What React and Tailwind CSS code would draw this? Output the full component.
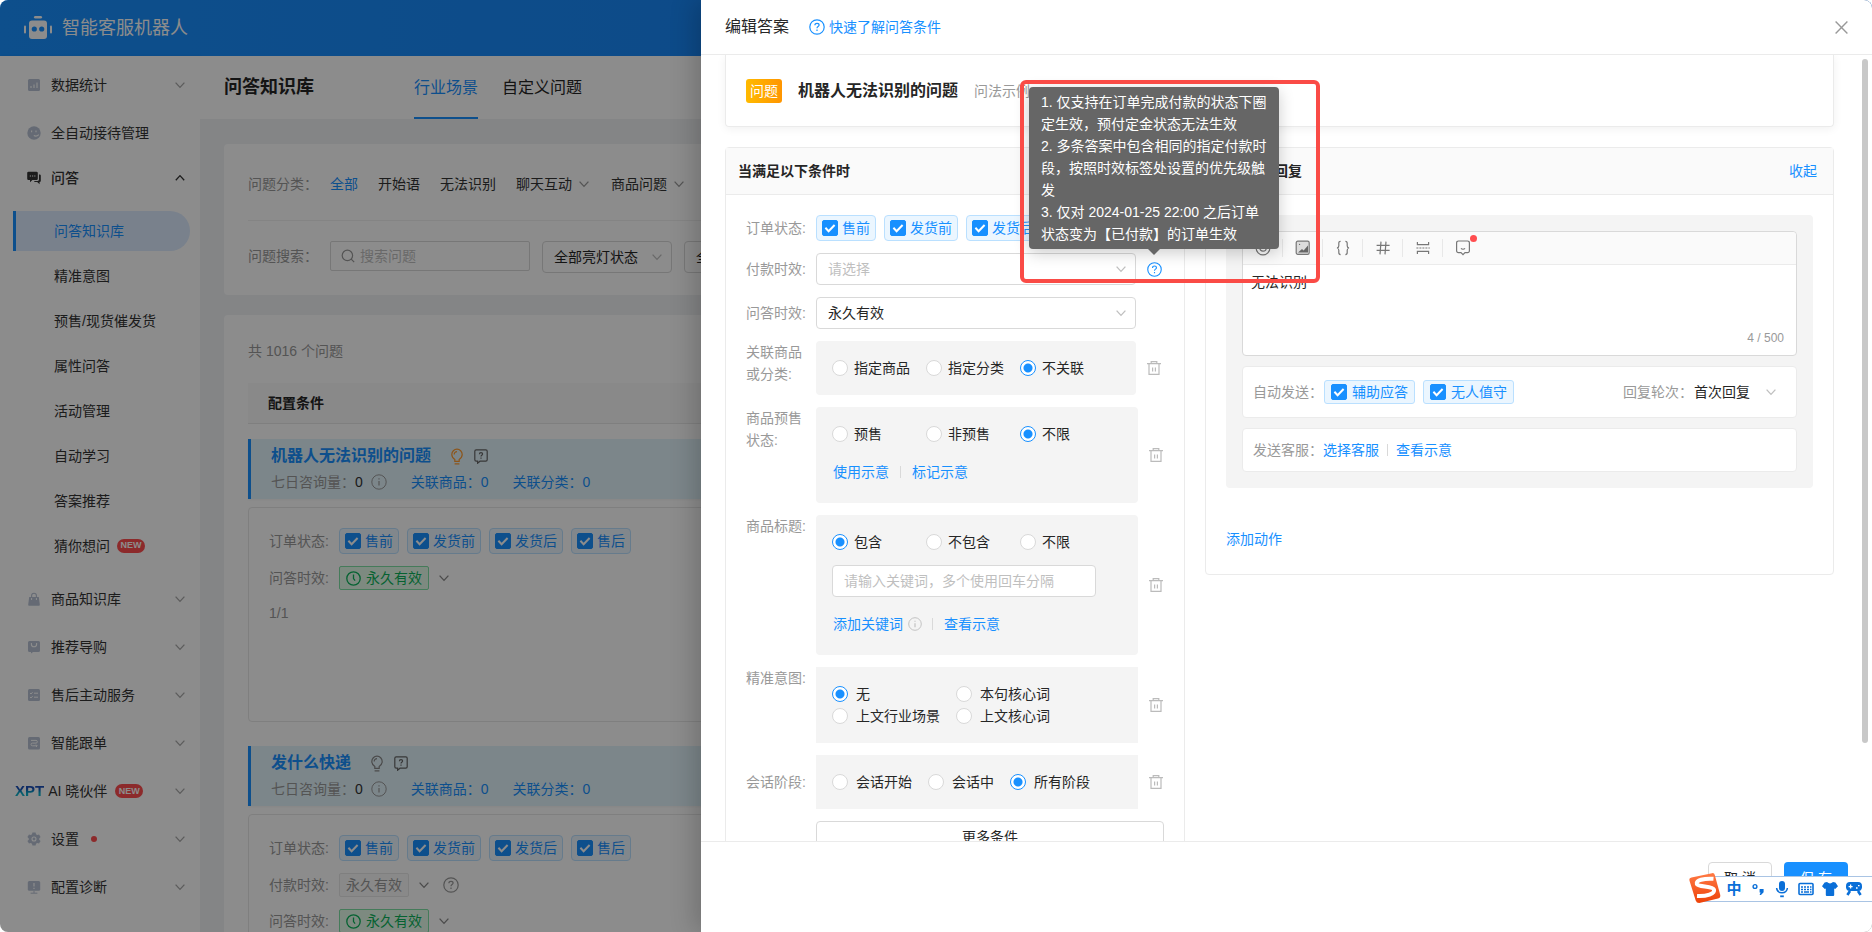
import React from "react";

const BLUE = "#1890ff";

function Chevron({ up, className = "" }) {
  return (
    <svg width="10" height="10" viewBox="0 0 10 10" fill="none" stroke="currentColor" strokeWidth="1.3" className={`shrink-0 ${className}`}>
      <path d={up ? "M0.8 7.2 5 2.6l4.2 4.6" : "M0.6 2.6 5 7.4l4.4-4.8"} />
    </svg>
  );
}

function Info({ size = 16, className = "" }) {
  return (
    <svg width={size} height={size} viewBox="0 0 16 16" fill="none" stroke="currentColor" className={`shrink-0 ${className}`}>
      <circle cx="8" cy="8" r="7.2" />
      <path d="M8 7v4.6M8 4.2v1.3" strokeWidth="1.2" />
    </svg>
  );
}

function Question({ size = 16, className = "" }) {
  return (
    <svg width={size} height={size} viewBox="0 0 16 16" fill="none" stroke="currentColor" strokeWidth="1.2" className={`shrink-0 ${className}`}>
      <circle cx="8" cy="8" r="7.2" />
      <path d="M5.9 6.3C5.9 5 6.8 4.3 8 4.3s2.1.7 2.1 1.8c0 1.5-2.1 1.5-2.1 3.1M8 10.6v1.3" />
    </svg>
  );
}

function Trash() {
  return (
    <button type="button" aria-label="删除" className="flex shrink-0 self-center text-[#bbb]">
      <svg width="14" height="16" viewBox="0 0 14 16" fill="none" stroke="currentColor" strokeWidth="1.2">
        <path d="M0 3.6h14M4.2 3.4V1.6h5.6v1.8M2 3.6v10.8h10V3.6M5.6 7.4v4M8.4 7.4v4" />
      </svg>
    </button>
  );
}

const navIcons = {
  chart: (
    <>
      <rect x="1" y="1" width="12" height="12" rx="1.5" />
      <path d="M4 10V8M7 10V6.4M10 10V4.4" stroke="#fff" strokeWidth="1.1" />
    </>
  ),
  face: (
    <>
      <circle cx="7" cy="7" r="6.7" />
      <path d="M4.6 4.6v1.6M9 4.6v1.6M6.8 9.6c1.8 1 3.6.6 5-1" stroke="#fff" strokeWidth="1.1" fill="none" />
    </>
  ),
  chat: (
    <>
      <path d="M1.5.8h8a1.3 1.3 0 0 1 1.3 1.3v5.6A1.3 1.3 0 0 1 9.5 9H5.4L3 11.2V9H1.5A1.3 1.3 0 0 1 .2 7.7V2.1A1.3 1.3 0 0 1 1.5.8z" />
      <path d="M12 3.4h.6a1.2 1.2 0 0 1 1.2 1.2v5.2a1.2 1.2 0 0 1-1.2 1.2v2.2L10.2 11H6.800l1-1h2.800a1.400 1.400 0 0 0 1.400-1.400z" />
      <path d="M2.8 5h1.2M5 5h1.2M7.2 5h1.2" stroke="#fff" strokeWidth="1.2" />
    </>
  ),
  bag: (
    <>
      <path d="M2.2 5h9.600l1 7.600a1 1 0 0 1-1 1.200H2.200a1 1 0 0 1-1-1.200z" />
      <path d="M4.6 8V3.600a2.400 2.400 0 0 1 4.800 0V8" stroke="currentColor" fill="none" strokeWidth="1.1" />
      <path d="M4.6 6v2M9.4 6v2" stroke="#fff" />
    </>
  ),
  guide: (
    <>
      <path d="M2.5 1h9A1.5 1.5 0 0 1 13 2.5v8a1.5 1.5 0 0 1-1.5 1.5H6l-2 1.6V12H2.5A1.5 1.5 0 0 1 1 10.5v-8A1.5 1.5 0 0 1 2.5 1z" />
      <path d="M4.4 3v1.2a2.6 2.6 0 0 0 5.2 0V3" stroke="#fff" fill="none" strokeWidth="1.1" />
    </>
  ),
  list: (
    <>
      <rect x="1" y="1" width="12" height="12" rx="1.5" />
      <path d="m3 5 1 1 1.6-1.8M7 5.2h4M3 9l1 1 1.6-1.8M7 9.2h4" stroke="#fff" fill="none" />
    </>
  ),
  follow: (
    <>
      <rect x="1" y="1" width="12" height="12.5" rx="1.5" />
      <path d="M4 4.4h5a1.3 1.3 0 0 1 0 2.7H5.4a1.3 1.3 0 0 0 0 2.7H10M9 8.6l1.2 1.2L9 11" stroke="#fff" fill="none" />
    </>
  ),
  gear: (
    <>
      <path d="M5.4.5h3.200l.4 1.800 1.200.7 1.800-.6 1.600 2.700-1.400 1.300v1.300l1.400 1.200-1.600 2.700-1.800-.5-1.200.7-.4 1.700H5.400L5 11.800l-1.200-.7-1.800.5L.4 8.900l1.400-1.200V6.400L.4 5.100 2 2.400l1.800.6L5 2.300z" />
      <circle cx="7" cy="7" r="2" fill="none" stroke="#fff" strokeWidth="1.1" />
    </>
  ),
  diag: (
    <>
      <rect x=".8" y="1" width="12.4" height="9.8" rx="1.5" />
      <path d="M7 10.8v2.200M3.600 13.200h6.800" stroke="currentColor" />
      <path d="M7 3v3.600M7 7.800v1.200" stroke="#fff" strokeWidth="1.2" />
    </>
  ),
};

function NavIcon({ name }) {
  return (
    <svg width="14" height="14" viewBox="0 0 14 14" fill="currentColor" className="shrink-0">
      {navIcons[name]}
    </svg>
  );
}

function NewBadge() {
  return (
    <span className="flex h-3.5 w-7 shrink-0 items-center justify-center rounded-full bg-[#ff4d4f] text-[9px] font-black text-white">
      NEW
    </span>
  );
}

function NavItem({ icon, label, dot }) {
  return (
    <a href="#" className="flex h-12 items-center pr-[15px] pl-[27px] text-[#b8c2d4]">
      <NavIcon name={icon} />
      <span className="ml-2.5 text-[#333]">{label}</span>
      {dot && <span className="ml-3 size-1.5 rounded-full bg-[#ff4d4f]" />}
      <Chevron className="ml-auto text-[#a8a8a8]" />
    </a>
  );
}

const subItems = ["精准意图", "预售/现货催发货", "属性问答", "活动管理", "自动学习", "答案推荐"];

function Sidebar() {
  return (
    <nav className="w-[200px] shrink-0 bg-white pt-[5px] shadow-[1px_0_3px_rgba(0,0,0,0.06)]">
      <NavItem icon="chart" label="数据统计" />
      <a href="#" className="flex h-12 items-center gap-2.5 pl-[27px] text-[#b8c2d4]">
        <NavIcon name="face" />
        <span className="text-[#333]">全自动接待管理</span>
      </a>
      <a href="#" className="flex h-[42px] items-center gap-2.5 pr-[15px] pl-[27px] font-medium text-[#333]">
        <NavIcon name="chat" />
        <span>问答</span>
        <Chevron up className="ml-auto" />
      </a>
      <div className="pt-[9px] pb-[7px]">
        <div className="flex h-[45px] items-center pr-2.5 pl-[13px]">
          <a href="#" className="flex h-10 flex-1 items-center rounded-r-full border-l-[3px] border-[#1890ff] bg-[#dcebff] pl-[38px] text-[#1890ff]">
            问答知识库
          </a>
        </div>
        {subItems.map((t) => (
          <a key={t} href="#" className="flex h-[45px] items-center pl-[54px] text-[#333]">
            {t}
          </a>
        ))}
        <a href="#" className="flex h-[45px] items-center gap-[7px] pl-[54px] text-[#333]">
          猜你想问 <NewBadge />
        </a>
      </div>
      <NavItem icon="bag" label="商品知识库" />
      <NavItem icon="guide" label="推荐导购" />
      <NavItem icon="list" label="售后主动服务" />
      <NavItem icon="follow" label="智能跟单" />
      <a href="#" className="flex h-12 items-center pr-[15px] pl-[15px]">
        <span className="bg-gradient-to-b from-[#1a4fb8] from-40% to-[#10b0c8] to-60% bg-clip-text text-[15px] font-black text-transparent">XPT</span>
        <span className="mr-2 ml-1 text-[#333]">AI 晓伙伴</span>
        <NewBadge />
        <Chevron className="ml-auto text-[#a8a8a8]" />
      </a>
      <NavItem icon="gear" label="设置" dot />
      <NavItem icon="diag" label="配置诊断" />
    </nav>
  );
}

function CheckTag({ label, wide }) {
  return (
    <label
      className={
        wide
          ? "flex h-6 items-center gap-[5px] rounded-[3px] border border-[#bae0ff] bg-[#ebf6ff] px-1.5 text-[#1890ff]"
          : "flex h-[26px] items-center gap-1 rounded border border-[#bae0ff] bg-[#ebf6ff] px-[5px] text-[#1890ff]"
      }
    >
      <span className="relative flex size-4">
        <input type="checkbox" defaultChecked className="peer size-4 appearance-none rounded-[2px] border border-[#d9d9d9] bg-white checked:border-[#1890ff] checked:bg-[#1890ff]" />
        <svg viewBox="0 0 16 16" fill="none" stroke="#fff" strokeWidth="2" className="pointer-events-none absolute inset-0 hidden peer-checked:block">
          <path d="m3.4 7.8 3.2 3.4 6-6.200" />
        </svg>
      </span>
      {label}
    </label>
  );
}

function ForeverTag() {
  return (
    <>
      <span className="flex h-6 items-center gap-[5px] rounded-[2px] border border-[#7fe0a4] bg-[#e3fcea] px-1.5 text-[#0bb35a]">
        <svg width="15" height="15" viewBox="0 0 15 15" fill="none" stroke="currentColor" strokeWidth="1.3">
          <circle cx="7.5" cy="7.5" r="6.7" />
          <path d="M7.5 3.6v4l1.6 2" />
        </svg>
        永久有效
      </span>
      <Chevron className="ml-2.5 text-[#888]" />
    </>
  );
}

function CardRow({ label, children, tall }) {
  return (
    <div className={tall ? "flex h-[26px] items-center" : "flex h-6 items-center"}>
      <span className="w-[70px] text-[#999]">{label}</span>
      {children}
    </div>
  );
}

function OrderTags() {
  return (
    <div className="flex gap-2">
      {["售前", "发货前", "发货后", "售后"].map((t) => (
        <CheckTag key={t} label={t} />
      ))}
    </div>
  );
}

function QuestionHead({ title, lit }) {
  return (
    <div className="h-[60px] border-l-[3px] border-[#1890ff] bg-[#e2f4fc] pt-[5px] pl-5 shadow-[0_1px_2px_rgba(0,0,0,0.05)]">
      <div className="flex h-6 items-center text-base font-bold text-[#1890ff]">
        <h3>{title}</h3>
        <svg width="12" height="17" viewBox="0 0 12 17" fill="none" stroke="currentColor" strokeWidth="1.2" className={lit ? "ml-5 text-[#ff9a2e]" : "ml-5 text-[#888]"}>
          <path d="M3.8 13.4v-2C2 10.2.8 8.6.8 6.4a5.2 5.2 0 0 1 10.4 0c0 2.2-1.2 3.8-3 5v2zM3.6 15.8h4.8M3.2 6.4A2.8 2.8 0 0 1 6 3.6" />
        </svg>
        <svg width="14" height="15" viewBox="0 0 14 15" fill="none" stroke="currentColor" strokeWidth="1.2" className="ml-[11px] text-[#666]">
          <path d="M2.2.8h9.6a1.4 1.4 0 0 1 1.4 1.4v8.6a1.4 1.4 0 0 1-1.4 1.4H6l-2.4 2v-2H2.200a1.400 1.400 0 0 1-1.400-1.400V2.200A1.400 1.400 0 0 1 2.200.8zM5.400 5.200c0-1 .7-1.500 1.600-1.500s1.600.5 1.600 1.400c0 1.200-1.600 1.200-1.600 2.400M7 8.600v1.200" />
        </svg>
      </div>
      <div className="mt-[3px] flex h-[22px] items-center text-[#999]">
        七日咨询量：<span className="text-[#333]">0</span>
        <Info className="mr-6 ml-2" />
        <a href="#" className="mr-6 text-[#1890ff]">关联商品：0</a>
        <a href="#" className="text-[#1890ff]">关联分类：0</a>
      </div>
    </div>
  );
}

function SelectBox({ id, options, className, wrap, placeholder, label }) {
  return (
    <div className={`grid items-center ${wrap}`}>
      <select
        id={id}
        aria-label={label}
        className={`col-start-1 row-start-1 h-8 w-full appearance-none rounded border border-[#d9d9d9] bg-white px-[11px] ${placeholder ? "text-[#bfbfbf]" : "text-[#262626]"} ${className || ""}`}
      >
        {options.map((o) => (
          <option key={o}>{o}</option>
        ))}
      </select>
      <Chevron className="pointer-events-none col-start-1 row-start-1 mr-2.5 justify-self-end text-[#bfbfbf]" />
    </div>
  );
}

function Page() {
  return (
    <div className="flex h-full flex-col">
      <header className="flex h-14 shrink-0 items-center bg-gradient-to-r from-[#1890ff] to-[#1a7cf0] pl-6 text-lg text-white">
        <svg width="28" height="24" viewBox="0 0 28 24" fill="currentColor">
          <rect x="10" y="0" width="8" height="2.4" rx="1.2" />
          <rect x="5" y="4.5" width="18" height="18.5" rx="3" />
          <rect x="0" y="9.5" width="2" height="8" rx="1" />
          <rect x="26" y="9.5" width="2" height="8" rx="1" />
          <circle cx="10.3" cy="13" r="2.6" fill={BLUE} />
          <circle cx="17.7" cy="13" r="2.6" fill={BLUE} />
        </svg>
        <span className="ml-2.5">智能客服机器人</span>
      </header>
      <div className="flex min-h-0 flex-1">
        <Sidebar />
        <main className="min-w-0 flex-1 overflow-hidden bg-[#f0f2f5]">
          <div className="flex h-[63px] bg-white pl-6">
            <h1 className="text-lg leading-[63px] font-bold text-[#262626]">问答知识库</h1>
            <div className="ml-[100px] flex gap-6 text-base">
              <a href="#" className="flex items-center border-b-2 border-[#1890ff] pt-0.5 text-[#1890ff]">行业场景</a>
              <a href="#" className="flex items-center border-b-2 border-transparent pt-0.5 text-[#262626]">自定义问题</a>
            </div>
          </div>
          <section className="mx-6 mt-[25px] rounded bg-white px-6 pt-6 pb-[22px]">
            <div className="flex h-8 items-center text-[#333]">
              <span className="w-[82px] text-[#999]">问题分类：</span>
              <div className="flex items-center gap-5">
                <a href="#" className="text-[#1890ff]">全部</a>
                <a href="#">开始语</a>
                <a href="#">无法识别</a>
                <a href="#" className="mr-0.5 flex items-center gap-[7px]">聊天互动 <Chevron className="text-[#999]" /></a>
                <a href="#" className="flex items-center gap-[7px]">商品问题 <Chevron className="text-[#999]" /></a>
              </div>
            </div>
            <div className="mt-5 flex items-start border-t border-[#f0f0f0] pt-5">
              <label htmlFor="q" className="w-[82px] leading-[30px] text-[#999]">问题搜索：</label>
              <div className="mr-3 flex h-[30px] w-[200px] items-center gap-[5px] rounded-[2px] border border-[#d9d9d9] pl-2.5 text-[#999]">
                <svg width="14" height="14" viewBox="0 0 14 14" fill="none" stroke="currentColor" strokeWidth="1.2" className="shrink-0">
                  <circle cx="6.4" cy="6.4" r="5.2" />
                  <path d="m10.2 10.2 3 3" />
                </svg>
                <input id="q" placeholder="搜索问题" className="w-full min-w-0 outline-none placeholder:text-[#bfbfbf]" />
              </div>
              <SelectBox label="亮灯状态" wrap="mr-3 w-[130px]" options={["全部亮灯状态"]} />
              <SelectBox label="答案状态" wrap="w-[130px]" options={["全部状态"]} />
            </div>
          </section>
          <section className="mx-6 mt-5 rounded bg-white px-6 pt-[25px] pb-6">
            <p className="leading-[22px] text-[#999]">共 1016 个问题</p>
            <div className="mt-[21px] mb-[15px] flex h-[41px] items-center border-b border-[#e8e8e8] bg-[#fafafa] pl-5 font-bold text-[#262626]">
              配置条件
            </div>
            <QuestionHead title="机器人无法识别的问题" lit />
            <div className="mt-2 mb-6 flex h-[215px] flex-col gap-3 rounded border border-[#e8e8e8] px-5 pt-5">
              <CardRow label="订单状态:" tall><OrderTags /></CardRow>
              <CardRow label="问答时效:"><ForeverTag /></CardRow>
              <p className="leading-[22px] text-[#999]">1/1</p>
            </div>
            <QuestionHead title="发什么快递" />
            <div className="mt-2 flex h-[215px] flex-col gap-3 rounded border border-[#e8e8e8] px-5 pt-5">
              <CardRow label="订单状态:" tall><OrderTags /></CardRow>
              <CardRow label="付款时效:">
                <span className="flex h-6 items-center rounded-[2px] border border-[#e8e8e8] bg-[#fafafa] px-1.5 text-[#999]">永久有效</span>
                <Chevron className="mr-3.5 ml-2.5 text-[#888]" />
                <Question className="text-[#999]" />
              </CardRow>
              <CardRow label="问答时效:"><ForeverTag /></CardRow>
            </div>
          </section>
        </main>
      </div>
    </div>
  );
}

function Radio({ name, label, checked, className = "", gap = "gap-1.5" }) {
  return (
    <label className={`flex h-[22px] items-center text-[#262626] ${gap} ${className}`}>
      <input
        type="radio"
        name={name}
        defaultChecked={checked}
        className="size-4 shrink-0 appearance-none rounded-full border border-[#d9d9d9] bg-white checked:border-[#1890ff] checked:bg-[radial-gradient(circle,#1890ff_0_4px,#fff_5px)]"
      />
      {label}
    </label>
  );
}

function Field({ label, children, action, className = "", center }) {
  return (
    <div className="flex">
      <span className={`w-[70px] shrink-0 leading-[22px] text-[#999] ${center ? "self-center" : ""}`}>{label}</span>
      <div className={className}>{children}</div>
      {action && <span className="ml-[11px] flex">{action}</span>}
    </div>
  );
}

function RadioRow({ name, items, selected }) {
  return (
    <div className="grid grid-cols-[94px_94px_1fr]">
      {items.map((t) => (
        <Radio key={t} name={name} label={t} checked={t === selected} />
      ))}
    </div>
  );
}

function Bar() {
  return <span className="h-3 w-px bg-[#d9d9d9]" />;
}

function Conditions() {
  return (
    <section className="w-[460px] shrink-0 rounded-t border border-[#ebebeb]">
      <h2 className="flex h-[47px] items-center border-b border-[#ebebeb] bg-[#fafafa] pl-3 font-bold text-[#262626]">当满足以下条件时</h2>
      <div className="flex flex-col gap-3 py-5 pl-5">
        <Field label="订单状态:" center><OrderTags /></Field>
        <Field label={<label htmlFor="pay">付款时效:</label>} center action={<Question size={15} className="self-center text-[#1890ff]" />} className="w-80">
          <SelectBox id="pay" wrap="w-full" options={["请选择"]} placeholder />
        </Field>
        <Field label={<label htmlFor="valid">问答时效:</label>} center className="w-80">
          <SelectBox id="valid" wrap="w-full" options={["永久有效"]} />
        </Field>
        <Field label={<>关联商品<br />或分类:</>} action={<Trash />} className="w-80 rounded bg-[#f4f4f4] p-4">
          <RadioRow name="goods" items={["指定商品", "指定分类", "不关联"]} selected="不关联" />
        </Field>
        <Field label={<>商品预售<br />状态:</>} action={<Trash />} className="h-24 w-[322px] rounded bg-[#f4f4f4] p-4">
          <RadioRow name="presale" items={["预售", "非预售", "不限"]} selected="不限" />
          <div className="mt-4 flex h-[22px] items-center gap-[11px] pl-px text-[#1890ff]">
            <a href="#">使用示意</a><Bar /><a href="#">标记示意</a>
          </div>
        </Field>
        <Field label="商品标题:" action={<Trash />} className="h-[140px] w-[322px] rounded bg-[#f4f4f4] p-4">
          <RadioRow name="title" items={["包含", "不包含", "不限"]} selected="包含" />
          <input aria-label="关键词" placeholder="请输入关键词，多个使用回车分隔" className="mt-3 block h-8 w-[264px] rounded border border-[#d9d9d9] bg-white px-[11px] placeholder:text-[#bfbfbf]" />
          <div className="mt-4 flex h-[22px] items-center pl-px text-[#1890ff]">
            <a href="#" className="mr-[5px]">添加关键词</a>
            <Info size={14} className="mr-2.5 text-[#bbb]" />
            <Bar />
            <a href="#" className="ml-[11px]">查看示意</a>
          </div>
        </Field>
        <Field label="精准意图:" action={<Trash />} className="w-[322px] bg-[#f4f4f4] p-4">
          <div className="grid grid-cols-[124px_1fr]">
            <Radio name="intent" label="无" checked gap="gap-2" />
            <Radio name="intent" label="本句核心词" gap="gap-2" />
            <Radio name="intent" label="上文行业场景" gap="gap-2" />
            <Radio name="intent" label="上文核心词" gap="gap-2" />
          </div>
        </Field>
        <Field label="会话阶段:" center action={<Trash />} className="w-[322px] bg-[#f4f4f4] p-4">
          <div className="flex gap-4">
            <Radio name="stage" label="会话开始" gap="gap-2" />
            <Radio name="stage" label="会话中" gap="gap-2" />
            <Radio name="stage" label="所有阶段" checked gap="gap-2" />
          </div>
        </Field>
        <button type="button" className="ml-[70px] h-8 w-[348px] shrink-0 rounded border border-[#d9d9d9] bg-white text-[#262626]">更多条件</button>
      </div>
    </section>
  );
}

const tools = [
  ["表情", <><circle cx="8" cy="8" r="6.9" /><circle cx="8" cy="8" r="3.2" /><path d="M5.6 6h.1M10.3 6h.1" /></>],
  ["图片", <><rect x="1.2" y="1.2" width="13" height="13.2" rx="1.6" fill="#ddd" stroke="#777" /><path d="m3 12.6 4-3.6 1.6 1.6L13 5.6v7z" fill="#666" stroke="none" /><circle cx="4.6" cy="4.4" r=".6" fill="#666" stroke="none" /></>],
  ["变量", <path d="M5.6 1.4C4 1.4 3.8 2 3.8 3.4v2.4c0 1.4-.6 2-1.8 2.2 1.2.2 1.8.8 1.8 2.2v2.4c0 1.4.2 2 1.8 2M10.4 1.4c1.6 0 1.8.6 1.8 2v2.4c0 1.4.6 2 1.8 2.2-1.2.2-1.8.8-1.8 2.2v2.4c0 1.4-.2 2-1.8 2" />],
  ["话题", <path d="M1.6 5.4h13M1.6 10.4h13M6 1.6 5 14.4M11 1.6l-1 12.8" />],
  ["分段", <><path d="M2.4 2v2.6h11.2V2M2.4 14v-2.6h11.2V14" /><path d="M1.4 8h13.4" strokeDasharray="2 1" /></>],
  ["快捷", <><path d="M3.400 1h9.200a1.800 1.800 0 0 1 1.800 1.800v8a1.800 1.800 0 0 1-1.800 1.800H10l-2 2-2-2H3.400a1.800 1.800 0 0 1-1.800-1.800v-8A1.800 1.800 0 0 1 3.400 1z" /><path d="M6 8.4c1 1 3 1 4 0" /></>],
];

function Reply() {
  return (
    <section className="min-w-0 flex-1 self-start rounded border border-[#ebebeb]">
      <div className="flex h-[47px] items-center justify-between border-b border-[#ebebeb] bg-[#fafafa] pr-4 pl-3">
        <h2 className="font-bold text-[#262626]">则机器人回复</h2>
        <a href="#" className="text-[#1890ff]">收起</a>
      </div>
      <div className="px-5 pt-5 pb-6">
        <div className="flex flex-col gap-2.5 rounded bg-[#f4f4f4] p-4">
          <div className="flex h-[125px] flex-col rounded border border-[#d9d9d9] bg-white">
            <div className="flex h-[33px] shrink-0 items-center rounded-t border-b border-[#ebebeb] bg-[#fafafa]">
              {tools.map(([name, art], i) => (
                <button key={name} type="button" aria-label={name} className={`relative flex h-[18px] w-10 items-center justify-center ${i < tools.length - 1 ? "border-r border-[#e8e8e8]" : ""}`}>
                  <svg width="16" height="16" viewBox="0 0 16 16" fill="none" stroke="#777" strokeWidth="1.2">{art}</svg>
                  {i === tools.length - 1 && <span className="absolute -top-1 right-1.5 size-[7px] rounded-full bg-[#ff4d4f]" />}
                </button>
              ))}
            </div>
            <textarea aria-label="回复内容" defaultValue="无法识别" className="min-h-0 flex-1 resize-none px-2 pt-1.5 leading-[22px] text-[#262626] outline-none" />
            <span className="pr-3 pb-2 text-right text-xs leading-[18px] text-[#999]">4 / 500</span>
          </div>
          <div className="flex h-[52px] items-center gap-2 rounded border border-[#ebebeb] bg-white px-2.5">
            <span className="w-[63px] whitespace-nowrap text-[#999]">自动发送：</span>
            <CheckTag label="辅助应答" wide />
            <CheckTag label="无人值守" wide />
            <label htmlFor="round" className="-mr-2 ml-auto text-[#999]">回复轮次：</label>
            <SelectBox id="round" wrap="w-[93px]" className="border-transparent !px-0" options={["首次回复"]} />
          </div>
          <div className="flex h-11 items-center rounded border border-[#ebebeb] bg-white px-2.5 text-[#1890ff]">
            <span className="text-[#999]">发送客服：</span>
            <a href="#" className="mr-2">选择客服</a>
            <Bar />
            <a href="#" className="ml-2">查看示意</a>
          </div>
        </div>
        <a href="#" className="mt-10 block w-max leading-[22px] text-[#1890ff]">添加动作</a>
      </div>
    </section>
  );
}

function Drawer() {
  return (
    <div role="dialog" aria-label="编辑答案" className="absolute inset-y-0 right-0 flex w-[calc(100%-701px)] flex-col bg-white shadow-[-6px_0_24px_rgba(0,0,0,0.2)]">
      <header className="flex h-[55px] shrink-0 items-center border-b border-[#ebebeb] pr-6 pl-6">
        <h2 className="text-base text-[#262626]">编辑答案</h2>
        <a href="#" className="ml-5 flex items-center gap-1 text-[#1890ff]"><Question />快速了解问答条件</a>
        <button type="button" aria-label="关闭" className="ml-auto text-[#999]">
          <svg width="13" height="13" viewBox="0 0 13 13" fill="none" stroke="currentColor" strokeWidth="1.4"><path d="m.6.6 11.8 11.8M12.4.6.6 12.4" /></svg>
        </button>
      </header>
      <div className="relative min-h-0 flex-1 overflow-hidden pr-[38px] pl-6">
        <div className="flex h-[72px] items-center rounded-b border border-t-0 border-[#ebebeb] pl-5 shadow-[0_2px_10px_rgba(0,0,0,0.06)]">
          <span className="flex h-6 w-9 items-center justify-center rounded-[3px] bg-gradient-to-r from-[#ffba00] to-[#ff9500] text-white">问题</span>
          <h3 className="ml-4 text-base font-bold text-[#262626]">机器人无法识别的问题</h3>
          <span className="ml-4 text-[#999]">问法示例</span>
        </div>
        <div className="mt-5 flex gap-5">
          <Conditions />
          <Reply />
        </div>
        <span className="absolute top-1 right-1 h-[87%] w-1.5 rounded-full bg-[#c8c8c8]" />
      </div>
      <footer className="flex h-[91px] shrink-0 items-start justify-end gap-3 border-t border-[#ebebeb] pt-5 pr-6">
        <button type="button" className="h-8 w-16 rounded border border-[#d9d9d9] bg-white text-[#262626]">取 消</button>
        <button type="button" className="h-8 w-16 rounded bg-[#1890ff] text-white">保 存</button>
      </footer>
    </div>
  );
}

function Tooltip() {
  return (
    <div role="tooltip" className="absolute top-[87px] left-[1029px] w-[250px] rounded bg-[#666] px-3 py-1 leading-[22px] text-white shadow-[0_4px_16px_rgba(0,0,0,0.2)]">
      <p>1. 仅支持在订单完成付款的状态下圈定生效，预付定金状态无法生效</p>
      <p>2. 多条答案中包含相同的指定付款时段，按照时效标签处设置的优先级触发</p>
      <p>3. 仅对 2024-01-25 22:00 之后订单状态变为【已付款】的订单生效</p>
      <span className="absolute top-full left-1/2 -translate-x-1/2 border-x-[6px] border-t-[6px] border-x-transparent border-t-[#666]" />
    </div>
  );
}

function ImeBar() {
  return (
    <div className="absolute right-0 bottom-[30px] flex h-[26px] w-[170px] items-center border-y border-[#a9c4e4] bg-white pl-5 text-[#0a6fd8]">
      <svg width="34" height="34" viewBox="0 0 34 34" className="absolute -top-[5px] -left-[14px]">
        <defs>
          <linearGradient id="sg" x1="0" y1="0" x2="0" y2="1">
            <stop offset="0" stopColor="#ff7a45" />
            <stop offset="1" stopColor="#ee4208" />
          </linearGradient>
        </defs>
        <path d="M3.5 5.6 24 1.2q2.2-.5 2.8 1.7l5.4 19.8q.7 3-2.2 3.9L12.4 30.8q-3.6.8-4.7-2.4L1.5 8.8q-.7-2.600 2-3.200z" fill="url(#sg)" />
        <path d="M25.5 6.8C16 6.2 7.400 8.200 8.800 12c1.200 3.200 16 1.800 17.200 5.600 1.200 4-7.600 7-17 6.400" fill="none" stroke="#fff" strokeWidth="4" />
      </svg>
      <span className="flex w-6 justify-center text-[15px] leading-6 font-bold">中</span>
      <span className="flex w-6 justify-center">
        <svg width="14" height="14" viewBox="0 0 14 14"><circle cx="4" cy="4.500" r="1.900" fill="none" stroke="currentColor" strokeWidth="1.4" /><path d="M8.600 7h4v3.200L10 13H8.600l1-2.400h-1z" fill="currentColor" /></svg>
      </span>
      <span className="flex w-6 justify-center">
        <svg width="14" height="17" viewBox="0 0 14 17" fill="currentColor"><rect x="4" y="0" width="6" height="10" rx="3" /><path d="M1.600 7c.3 3 2.400 4.800 5.400 4.800S12.100 10 12.400 7" fill="none" stroke="currentColor" strokeWidth="1.5" /><rect x="5.200" y="14.400" width="3.600" height="1.800" /></svg>
      </span>
      <span className="flex w-6 justify-center">
        <svg width="16" height="14" viewBox="0 0 16 14"><rect x="1" y="1.5" width="14" height="11" rx="1" fill="none" stroke="currentColor" strokeWidth="1.6" /><path d="M3 5h2M6 5h2M9 5h2M12 5h1.500M3 7.500h2M6 7.500h2M9 7.500h2M12 7.500h1.500M3 10h2M6 10h5M12 10h1.500" stroke="currentColor" strokeWidth="1.4" /></svg>
      </span>
      <span className="flex w-6 justify-center">
        <svg width="16" height="14" viewBox="0 0 16 14" fill="currentColor"><path d="M5 0q3 2.800 6 0l2.400.6L16 4.200 13.200 7l-1-.6V13q0 1-1 1H4.800q-1 0-1-1V6.400l-1 .6L0 4.200 2.600.6z" /></svg>
      </span>
      <span className="flex w-6 justify-center">
        <svg width="16" height="14" viewBox="0 0 16 14" fill="currentColor"><path d="M4 0h8a4 4 0 0 1 4 4v1.500a4 4 0 0 1-4 3.500H4a4 4 0 0 1-4-3.500V4a4 4 0 0 1 4-4z" /><path d="M4.600 2.600v4M2.600 4.600h4M10 6h1.600M12 3.600h1.600" stroke="#fff" strokeWidth="1.3" /><path d="m4 9-2.600 4M12 9l2.600 4" stroke="currentColor" strokeWidth="2.6" /></svg>
      </span>
    </div>
  );
}

export default function App() {
  return (
    <div className="h-screen bg-white">
      <div className="relative h-full overflow-hidden rounded-lg font-['Liberation_Sans','Noto_Sans_CJK_SC',sans-serif] text-sm">
        <Page />
        <div className="absolute inset-0 bg-black/45" />
        <Drawer />
        <Tooltip />
        <div className="pointer-events-none absolute top-20 left-[1020px] h-[203px] w-[300px] rounded-md border-4 border-[#fa4b46]" />
        <ImeBar />
      </div>
    </div>
  );
}
